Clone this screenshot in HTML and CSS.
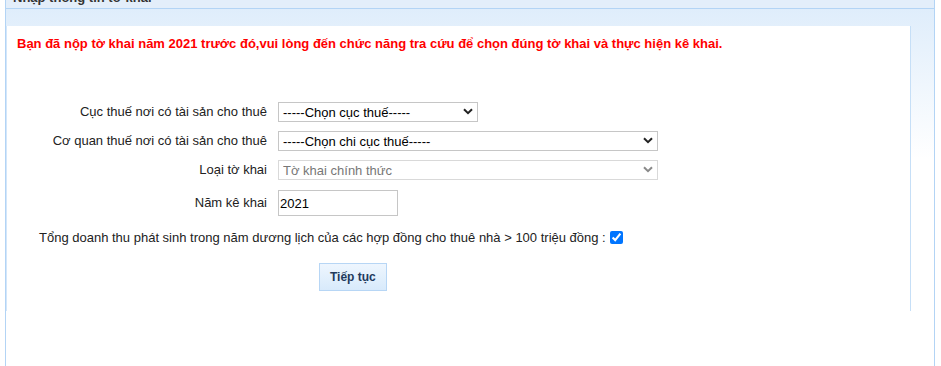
FILE: index.html
```html
<!DOCTYPE html>
<html lang="vi">
<head>
    <meta charset="UTF-8">
    <title>Nhập thông tin tờ khai</title>
    <link rel="stylesheet" href="styles.css">
</head>
<body>
<div class="panel">
    <div class="panel-title">Nhập thông tin tờ khai</div>
    <div class="panel-body">
        <div class="content">
            <p class="warning">Bạn đã nộp tờ khai năm 2021 trước đó,vui lòng đến chức năng tra cứu để chọn đúng tờ khai và thực hiện kê khai.</p>

            <div class="form">
                <label class="field-label" for="cuc-thue">Cục thuế nơi có tài sản cho thuê</label>
                <div class="select-wrap short">
                    <select id="cuc-thue" class="field-select">
                        <option>-----Chọn cục thuế-----</option>
                    </select>
                    <svg class="chevron" width="10" height="7" viewBox="0 0 10 7"><path d="M1 1.2 L5 5.2 L9 1.2" fill="none" stroke="#222" stroke-width="2"/></svg>
                </div>

                <label class="field-label" for="chi-cuc">Cơ quan thuế nơi có tài sản cho thuê</label>
                <div class="select-wrap long">
                    <select id="chi-cuc" class="field-select">
                        <option>-----Chọn chi cục thuế-----</option>
                    </select>
                    <svg class="chevron" width="10" height="7" viewBox="0 0 10 7"><path d="M1 1.2 L5 5.2 L9 1.2" fill="none" stroke="#222" stroke-width="2"/></svg>
                </div>

                <label class="field-label" for="loai-tk">Loại tờ khai</label>
                <div class="select-wrap long">
                    <select id="loai-tk" class="field-select" disabled>
                        <option>Tờ khai chính thức</option>
                    </select>
                    <svg class="chevron" width="10" height="7" viewBox="0 0 10 7"><path d="M1 1.2 L5 5.2 L9 1.2" fill="none" stroke="#8a8a8a" stroke-width="2"/></svg>
                </div>

                <label class="field-label year-label" for="nam-kk">Năm kê khai</label>
                <input id="nam-kk" class="field-input" type="text" value="2021">
            </div>

            <div class="check-row">
                Tổng doanh thu phát sinh trong năm dương lịch của các hợp đồng cho thuê nhà &gt; 100 triệu đồng :<input type="checkbox" class="check" checked>
            </div>

            <div class="actions">
                <button class="btn" type="button">Tiếp tục</button>
            </div>
        </div>
    </div>
</div>
</body>
</html>
```

FILE: styles.css
```css
body {
    margin: 0;
    padding: 0;
    font-family: "Liberation Sans", Arial, sans-serif;
    font-size: 13px;
    color: #222;
    background-color: #fff;
    overflow: hidden;
}

/* outer panel, page is scrolled a little so the title is cut */
.panel {
    margin: -13px 0 0 5px;
    width: 930px;
    height: calc(100vh + 13px);
    box-sizing: border-box;
    overflow: hidden;
    border-left: 1px solid #b3d4f5;
    border-right: 1px solid #b3d4f5;
}

.panel-title {
    height: 18px;
    padding: 3px 0 0 7px;
    line-height: 15px;
    font-weight: bold;
    color: #333;
    background-color: #e3eefa;
    border-bottom: 1px solid #b3d4f5;
}

.panel-body {
    padding: 17px 23px 0 0;
    background: #fff linear-gradient(to bottom, #dfedfb 0, #fff 150px) no-repeat;
}

/* white inner box */
.content {
    height: 285px;
    padding-top: 10px;
    box-sizing: border-box;
    background-color: #fff;
    border-left: 1px solid #d3e6fa;
    border-right: 1px solid #c6dff7;
}

.warning {
    margin: 0 0 0 10px;
    line-height: 16px;
    font-weight: bold;
    color: #f00;
}

.form {
    display: grid;
    grid-template-columns: 260px auto;
    column-gap: 11px;
    row-gap: 9px;
    align-items: center;
    justify-items: start;
    margin-top: 50px;
}

.field-label {
    justify-self: end;
    line-height: 16px;
}

.year-label,
.field-input {
    margin-top: 1px;
}

.select-wrap {
    position: relative;
    height: 20px;
}

.select-wrap.short {
    width: 200px;
}

.select-wrap.long {
    width: 380px;
}

.field-select {
    appearance: none;
    -webkit-appearance: none;
    width: 100%;
    height: 20px;
    margin: 0;
    padding: 0 20px 0 4px;
    box-sizing: border-box;
    font-family: inherit;
    font-size: 13px;
    color: #000;
    background-color: #fff;
    border: 1px solid #c6c6c6;
    border-radius: 0;
    outline: none;
}

.field-select:disabled {
    color: #777;
    border-color: #d9d9d9;
    opacity: 1;
}

.chevron {
    position: absolute;
    right: 5px;
    top: 6px;
    pointer-events: none;
}

.field-input {
    width: 120px;
    height: 26px;
    margin-left: 0;
    padding: 0 0 0 1px;
    box-sizing: border-box;
    font-family: inherit;
    font-size: 13px;
    color: #000;
    border: 1px solid #c6c6c6;
    border-radius: 0;
    outline: none;
}

.check-row {
    margin: 14px 0 0 32px;
    line-height: 16px;
}

.check {
    width: 13px;
    height: 13px;
    margin: 0 0 0 4px;
    vertical-align: -2px;
}

.actions {
    margin: 17px 0 0 312px;
}

.btn {
    height: 28px;
    padding: 0 10px;
    font-family: inherit;
    font-size: 12px;
    font-weight: bold;
    color: #233a5c;
    background: linear-gradient(to bottom, #eef6fe, #d8eafb);
    border: 1px solid #b7d6f5;
    border-radius: 0;
}
```
